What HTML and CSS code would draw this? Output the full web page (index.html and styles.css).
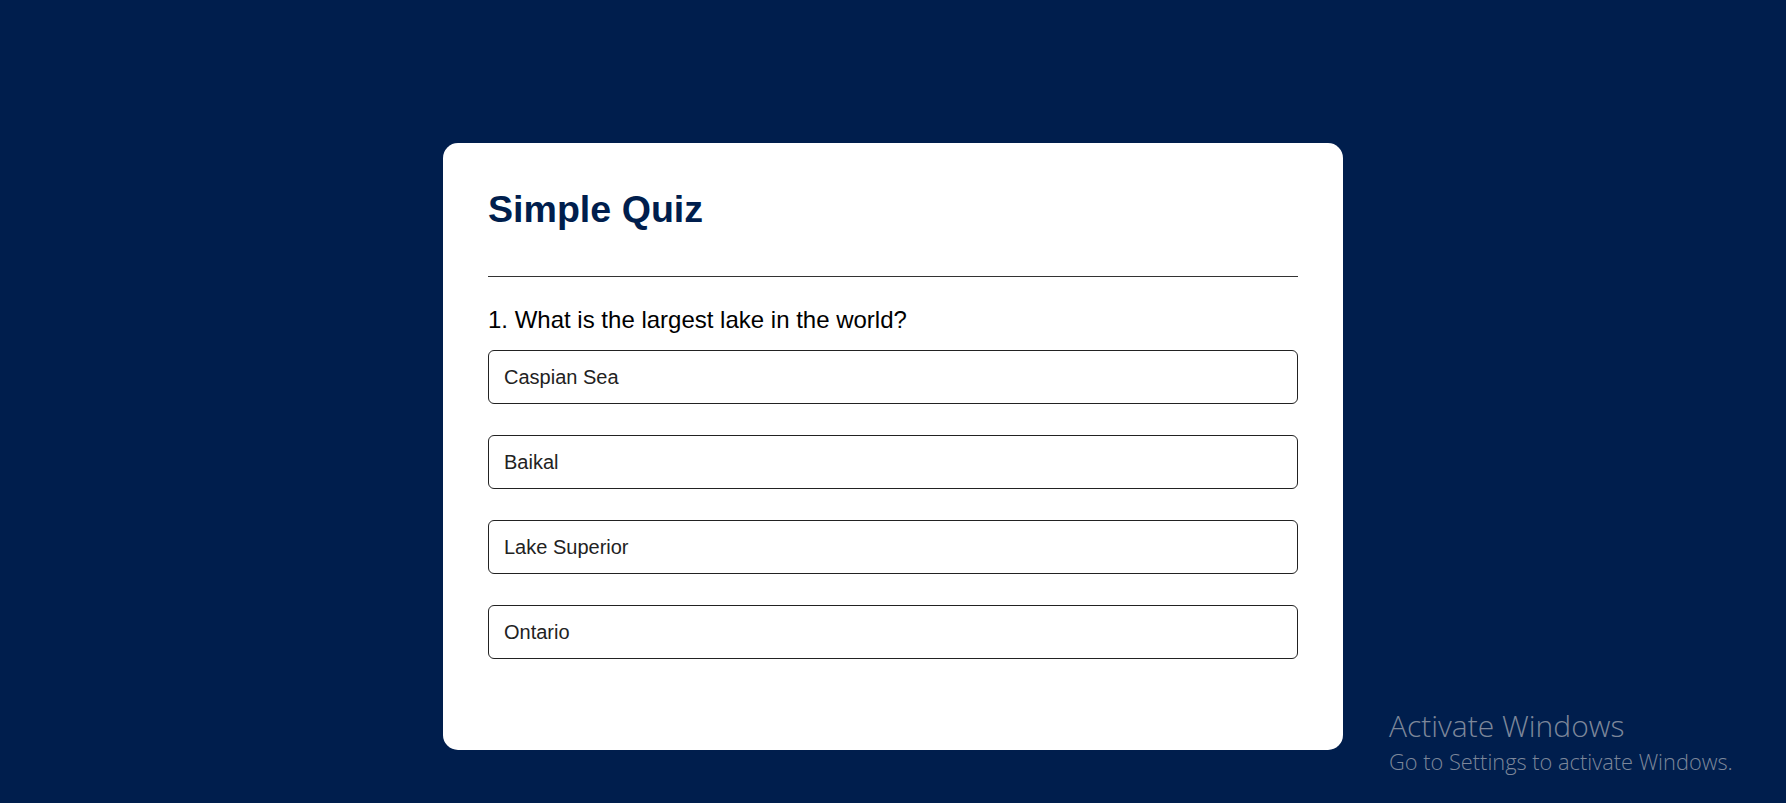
FILE: index.html
```html
<!DOCTYPE html>
<html lang="en">
<head>
<meta charset="UTF-8">
<title>Simple Quiz</title>
<link rel="stylesheet" href="styles.css">
</head>
<body>
<div class="app">
  <h1 class="title">Simple Quiz</h1>
  <div class="quiz">
    <h2 class="question">1. What is the largest lake in the world?</h2>
    <div class="answers">
      <button class="btn">Caspian Sea</button>
      <button class="btn">Baikal</button>
      <button class="btn">Lake Superior</button>
      <button class="btn">Ontario</button>
    </div>
  </div>
</div>
<div class="watermark">
  <div class="wm-title">Activate Windows</div>
  <div class="wm-sub">Go to Settings to activate Windows.</div>
</div>
</body>
</html>
```

FILE: styles.css
```css
* {
  box-sizing: border-box;
}

html, body {
  margin: 0;
  padding: 0;
}

body {
  background: #001e4d;
  font-family: "Liberation Sans", Arial, sans-serif;
  height: 803px;
  overflow: hidden;
}

.app {
  background: #fff;
  width: 900px;
  margin: 143px auto 0;
  border-radius: 15px;
  padding: 45px;
}

.title {
  margin: 0;
  font-size: 37.6px;
  line-height: 43px;
  font-weight: 700;
  color: #001e4d;
  padding-bottom: 45px;
  border-bottom: 1px solid #333;
}

.quiz {
  padding: 29px 0 46px;
}

.question {
  margin: 0 0 16px;
  font-size: 24px;
  line-height: 28px;
  font-weight: 400;
  color: #000;
}

.answers {
  display: flex;
  flex-direction: column;
  gap: 31px;
}

.btn {
  display: block;
  width: 100%;
  background: #fff;
  color: #222;
  font-family: "Liberation Sans", Arial, sans-serif;
  font-size: 20px;
  line-height: 23px;
  font-weight: 400;
  text-align: left;
  border: 1px solid #222;
  border-radius: 6px;
  padding: 15px 15px 14px;
  margin: 0;
}

.watermark {
  position: absolute;
  left: 1389px;
  top: 709px;
  font-family: "Open Sans", "Noto Sans", sans-serif;
  font-weight: 300;
  color: #7d879a;
  white-space: nowrap;
}

.wm-title {
  font-size: 30px;
  line-height: 34px;
}

.wm-sub {
  font-size: 21.8px;
  line-height: 32px;
  margin-top: 3px;
}
```
